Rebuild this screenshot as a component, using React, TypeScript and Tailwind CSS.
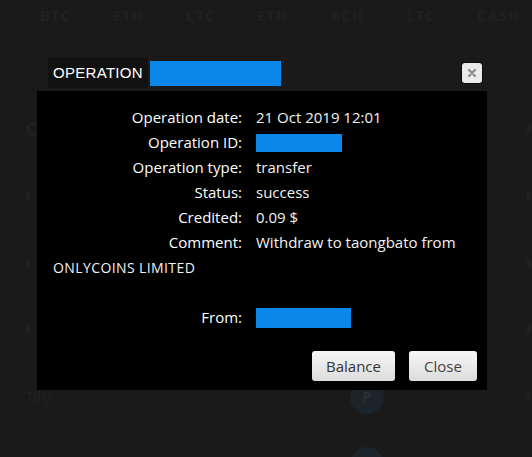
import React from "react";

const tabs = ["BTC", "ETH", "LTC", "ETH", "BCH", "LTC", "CASH"];

function Row({ label, children }: { label: string; children?: React.ReactNode }) {
  return (
    <>
      <div className="text-right text-white h-[25px] leading-[25px]">{label}</div>
      <div className="text-[#f2f2f2] h-[25px] leading-[25px] flex items-center">{children}</div>
    </>
  );
}

function BgRow({ left, circle }: { left?: React.ReactNode; circle?: React.ReactNode }) {
  return (
    <div className="h-[67px] flex items-center pl-[26px] pr-[1px]">
      <div className="w-[40px] text-[#222] text-[14px] font-bold">{left}</div>
      <div className="w-[284px]" />
      {circle ? (
        <div className="w-[34px] h-[34px] rounded-full bg-[#1c2329] flex items-center justify-center text-[#283038] text-[14px] font-bold">
          {circle}
        </div>
      ) : null}
      <div className="flex-1" />
      <div className="w-[4px] h-[8px] bg-[#202020]" />
    </div>
  );
}

export default function App() {
  return (
    <div
      className="relative w-[532px] h-[457px] overflow-hidden bg-[#1a1a1a]"
      style={{ fontFamily: '"Open Sans", "Liberation Sans", sans-serif' }}
    >
      {/* faded background content */}
      <div className="flex h-[30px] items-center justify-between pl-[40px] pr-[12px] text-[15px] font-bold text-[#202020] tracking-wider">
        {tabs.map((t, i) => (
          <span key={i}>{t}</span>
        ))}
      </div>
      <div className="flex flex-col pt-[65px]">
        <BgRow left={<span className="text-[16px]">C</span>} />
        <BgRow left={<span className="block w-[4px] h-[8px] bg-[#202020]" />} />
        <BgRow left={<span className="block w-[4px] h-[8px] bg-[#202020]" />} />
        <BgRow left={<span className="block w-[4px] h-[8px] bg-[#202020]" />} />
        <BgRow left={<span className="font-normal text-[#222]">Tilly</span>} circle="P" />
        <BgRow circle=" " />
      </div>

      {/* modal */}
      <div className="absolute left-[37px] top-[55px] w-[450px]">
        <div className="h-[36px] flex items-center justify-between pl-[11px] pr-[5px]">
          <div className="flex items-center">
            <span
              className="bg-[#111] px-[5px] text-white text-[15px] tracking-[0.3px] leading-[30px]"
              style={{ fontFamily: '"Liberation Sans", sans-serif' }}
            >
              OPERATION
            </span>
            <span className="ml-[2px] w-[131px] h-[25px] bg-[#0b87e9]" />
          </div>
          <button className="w-[20px] h-[20px] rounded-[3px] bg-[#ebebeb] flex items-center justify-center shadow-[0_0_0_1px_#0e0e0e]">
            <svg width="10" height="10" viewBox="0 0 10 10">
              <path d="M2 2 L8 8 M8 2 L2 8" stroke="#8a8a8a" strokeWidth="2.2" strokeLinecap="round" />
            </svg>
          </button>
        </div>
        <div className="bg-black pt-[14px] pb-[9px] text-[15px]">
          <div className="grid grid-cols-[205px_1fr] gap-x-[14px]">
            <Row label="Operation date:">21 Oct 2019 12:01</Row>
            <Row label="Operation ID:">
              <span className="block w-[86px] h-[18px] bg-[#0b87e9]" />
            </Row>
            <Row label="Operation type:">transfer</Row>
            <Row label="Status:">success</Row>
            <Row label="Credited:">0.09 $</Row>
            <Row label="Comment:">Withdraw to taongbato from</Row>
          </div>
          <div className="pl-[16px] h-[25px] leading-[25px] text-[#f2f2f2] text-[14px] tracking-[0.4px]">
            ONLYCOINS LIMITED
          </div>
          <div className="h-[25px]" />
          <div className="grid grid-cols-[205px_1fr] gap-x-[14px]">
            <Row label="From:">
              <span className="block w-[95px] h-[20px] bg-[#0b87e9]" />
            </Row>
          </div>
          <div className="flex justify-end gap-[14px] pr-[10px] mt-[21px]">
            <button className="w-[83px] h-[30px] rounded-[3px] bg-gradient-to-b from-[#f7f7f7] to-[#dcdcdc] text-[#333] text-[15px]">
              Balance
            </button>
            <button className="w-[68px] h-[30px] rounded-[3px] bg-gradient-to-b from-[#f7f7f7] to-[#dcdcdc] text-[#444] text-[15px]">
              Close
            </button>
          </div>
        </div>
      </div>
    </div>
  );
}
